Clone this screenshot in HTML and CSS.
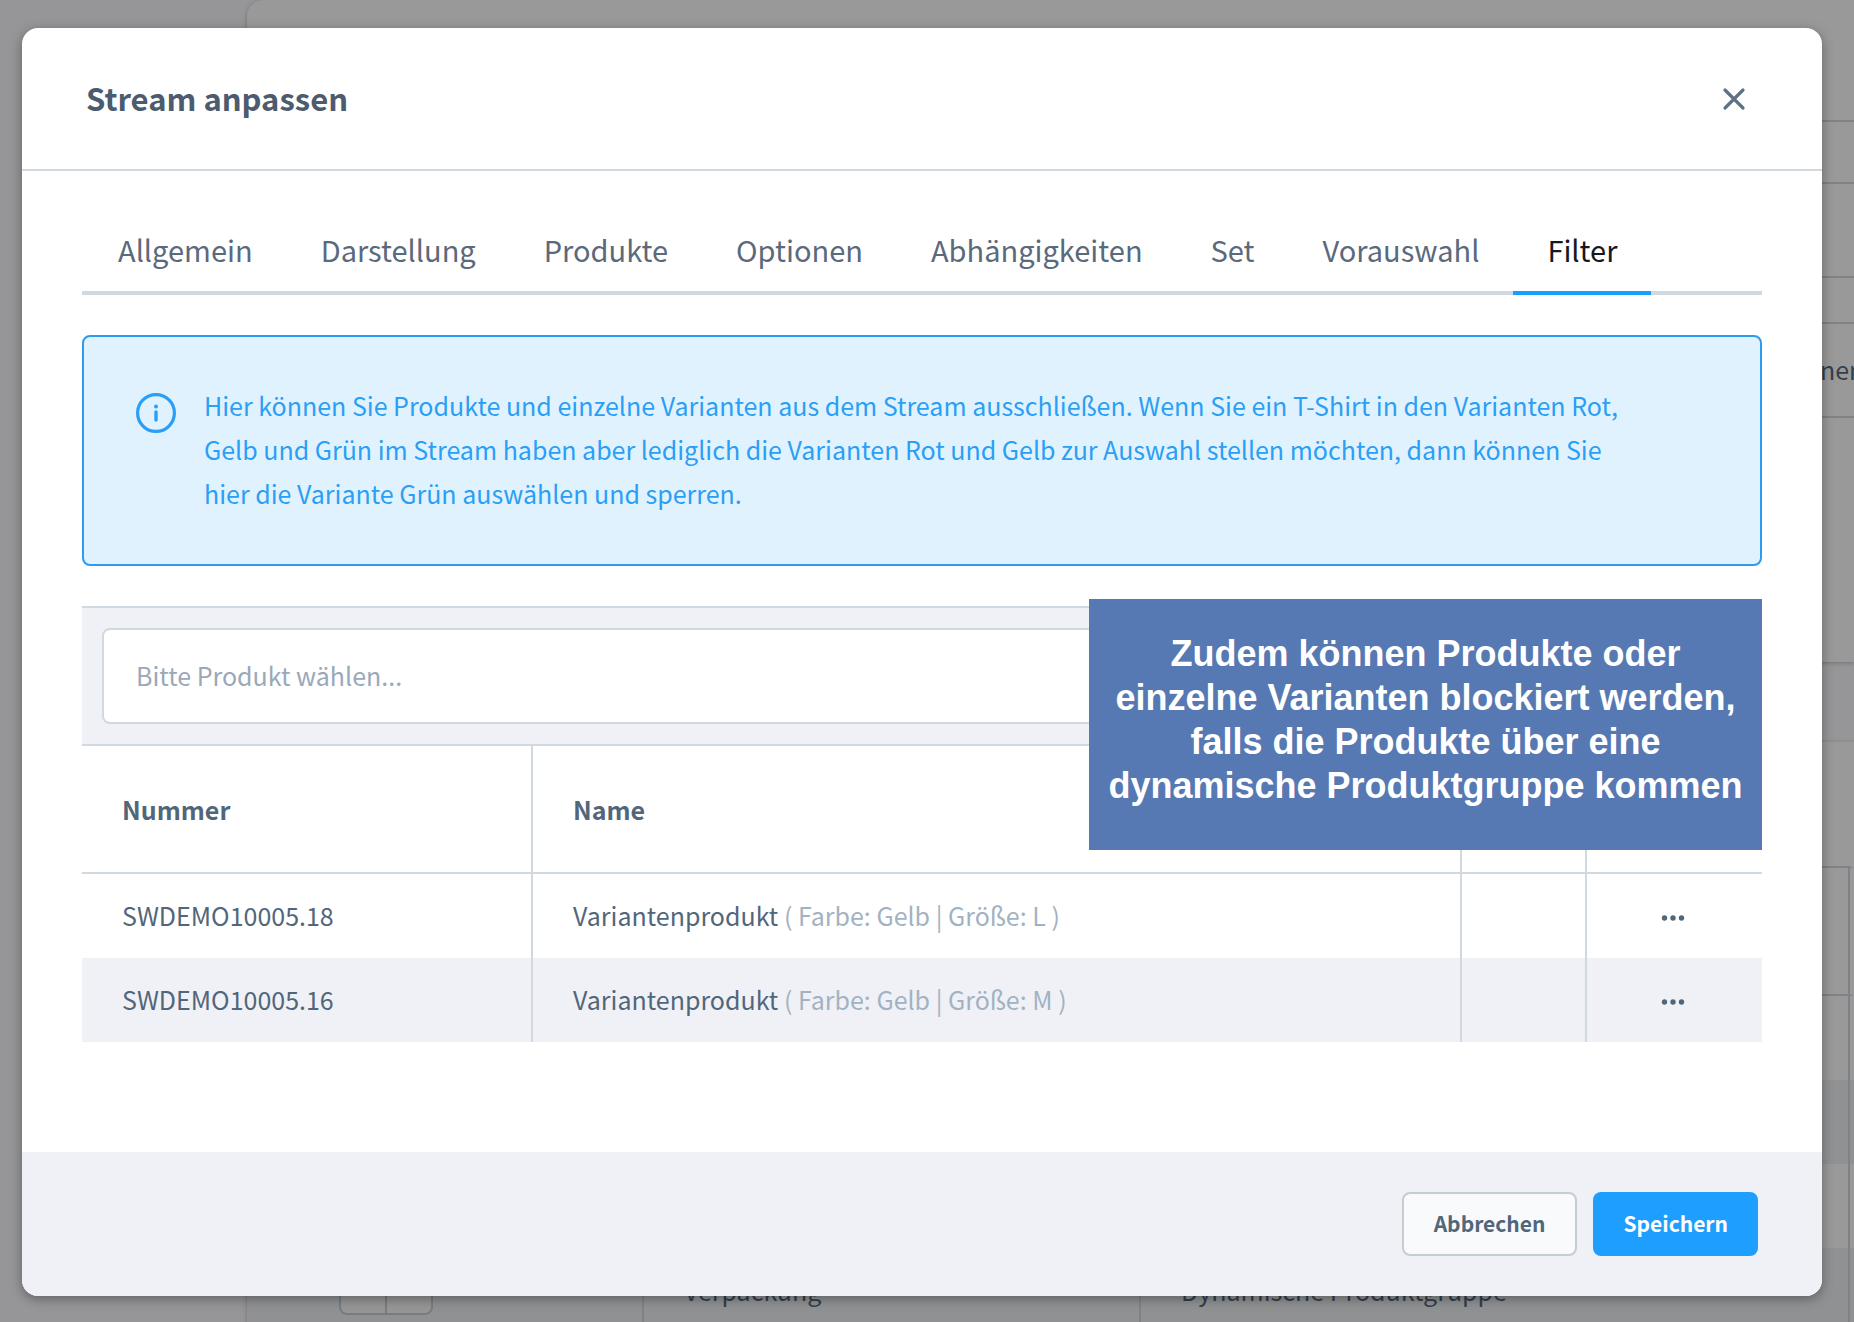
FILE: index.html
```html
<!DOCTYPE html>
<html lang="de">
<head>
<meta charset="utf-8">
<meta name="viewport" content="width=device-width, initial-scale=1">
<title>Stream anpassen</title>
<link rel="stylesheet" href="styles.css">
</head>
<body>
<div class="page" aria-hidden="true">
  <div class="page-side"></div>
  <div class="page-main">
    <div class="page-card page-card-top">
      <div class="rule rule-gap-a"></div>
      <div class="rule rule-gap-b"></div>
      <div class="rule rule-gap-c"></div>
      <div class="rule rule-gap-d"></div>
      <div class="rule rule-gap-e"><span>nen</span></div>
    </div>
    <div class="page-card page-card-grid">
      <div class="bg-row bg-toolbar"></div>
      <div class="bg-row bg-head"></div>
      <div class="bg-row bg-line"></div>
      <div class="bg-row bg-line bg-odd"></div>
      <div class="bg-row bg-line"></div>
      <div class="bg-row bg-line bg-odd bg-last">
        <div class="bg-cell bg-cell-order"><div class="bg-stepper"><i></i><i></i></div></div>
        <div class="bg-cell bg-cell-name">Verpackung</div>
        <div class="bg-cell bg-cell-type">Dynamische Produktgruppe</div>
      </div>
    </div>
  </div>
</div>

<div class="modal" role="dialog" aria-modal="true" aria-labelledby="modal-title">
  <header class="modal-header">
    <h1 class="modal-title" id="modal-title">Stream anpassen</h1>
    <button class="modal-close" type="button" aria-label="Schließen">
      <svg width="24" height="24" viewBox="0 0 24 24" fill="none" stroke="currentColor" stroke-width="3.2" stroke-linecap="round"><path d="M3 3L21 21M21 3L3 21"/></svg>
    </button>
  </header>

  <main class="modal-body">
    <nav class="tabs">
      <a class="tab" href="#allgemein">Allgemein</a>
      <a class="tab" href="#darstellung">Darstellung</a>
      <a class="tab" href="#produkte">Produkte</a>
      <a class="tab" href="#optionen">Optionen</a>
      <a class="tab" href="#abhaengigkeiten">Abhängigkeiten</a>
      <a class="tab" href="#set">Set</a>
      <a class="tab" href="#vorauswahl">Vorauswahl</a>
      <a class="tab tab-active" href="#filter" aria-current="page">Filter</a>
    </nav>

    <div class="alert">
      <svg class="alert-icon" width="40" height="40" viewBox="0 0 40 40" fill="none" stroke="currentColor"><circle cx="20" cy="20" r="18.4" stroke-width="3.2"/><path d="M20 19V27" stroke-width="3.4" stroke-linecap="round"/><circle cx="20" cy="13.6" r="2" fill="currentColor" stroke="none"/></svg>
      <p class="alert-text">Hier können Sie Produkte und einzelne Varianten aus dem Stream ausschließen. Wenn Sie ein T-Shirt in den Varianten Rot, Gelb und Grün im Stream haben aber lediglich die Varianten Rot und Gelb zur Auswahl stellen möchten, dann können Sie hier die Variante Grün auswählen und sperren.</p>
    </div>

    <section class="grid">
      <div class="grid-toolbar">
        <input class="product-select" type="text" placeholder="Bitte Produkt wählen..." aria-label="Produkt">
      </div>
      <table class="grid-table">
        <colgroup><col class="col-number"><col><col class="col-empty"><col class="col-actions"></colgroup>
        <thead>
          <tr><th>Nummer</th><th>Name</th><th></th><th></th></tr>
        </thead>
        <tbody>
          <tr>
            <td>SWDEMO10005.18</td>
            <td>Variantenprodukt <span class="variant">( Farbe: Gelb | Größe: L )</span></td>
            <td></td>
            <td class="actions"><button class="row-menu" type="button" aria-label="Aktionen"><svg width="24" height="8" viewBox="0 0 24 8" fill="currentColor"><circle cx="3.5" cy="4" r="2.7"/><circle cx="12" cy="4" r="2.7"/><circle cx="20.5" cy="4" r="2.7"/></svg></button></td>
          </tr>
          <tr>
            <td>SWDEMO10005.16</td>
            <td>Variantenprodukt <span class="variant">( Farbe: Gelb | Größe: M )</span></td>
            <td></td>
            <td class="actions"><button class="row-menu" type="button" aria-label="Aktionen"><svg width="24" height="8" viewBox="0 0 24 8" fill="currentColor"><circle cx="3.5" cy="4" r="2.7"/><circle cx="12" cy="4" r="2.7"/><circle cx="20.5" cy="4" r="2.7"/></svg></button></td>
          </tr>
        </tbody>
      </table>
      <aside class="callout">Zudem können Produkte oder<br>einzelne Varianten blockiert werden,<br>falls die Produkte über eine<br>dynamische Produktgruppe kommen</aside>
    </section>
  </main>

  <footer class="modal-footer">
    <button class="btn" type="button">Abbrechen</button>
    <button class="btn btn-primary" type="button">Speichern</button>
  </footer>
</div>
</body>
</html>
```
FILE: styles.css
```css
* { box-sizing: border-box; }

body {
  margin: 0;
  min-height: 100vh;
  padding: 28px 32px 26px 22px;
  display: flex;
  position: relative;
  overflow-x: hidden;
  background: #969698;
  color: #52667a;
  font-family: "Noto Sans CJK SC", "Noto Sans", sans-serif;
  font-size: 25px;
  line-height: 44px;
}

button, input { font: inherit; color: inherit; }

/* Dimmed page behind the dialog */
.page {
  position: absolute;
  inset: 0;
  display: flex;
  overflow: hidden;
  color: #343f4b;
}
.page-side { flex: 0 0 247px; }
.page-main {
  flex: 1;
  min-width: 0;
  display: flex;
  flex-direction: column;
  gap: 80px;
}
.page-card {
  background: #999;
  box-shadow: 0 1px 4px rgba(0, 0, 0, .25);
}
.page-card-top {
  height: 662px;
  flex: none;
  border-radius: 16px 0 0 0;
}
.page-card-grid { flex: 1; }
.rule { border-bottom: 2px solid #7f8388; }
.rule-gap-a { height: 122px; }
.rule-gap-b { height: 62px; }
.rule-gap-c { height: 94px; }
.rule-gap-d { height: 46px; }
.rule-gap-e {
  height: 94px;
  padding-bottom: 2px;
  display: flex;
  justify-content: flex-end;
  align-items: center;
}
.rule-gap-e span { width: 34px; }
.bg-row { border-right: 4px solid #999; }
.bg-toolbar {
  height: 126px;
  border-bottom: 2px solid #7f8388;
}
.bg-head {
  height: 128px;
  border-bottom: 2px solid #7f8388;
  box-shadow: inset -2px 0 #7f8388;
}
.bg-line {
  height: 84px;
  box-shadow: inset -2px 0 #7f8388;
}
.bg-odd {
  background: #8f9193;
  border-right-color: #8f9193;
}
.bg-last { display: flex; }
.bg-cell {
  flex: 1;
  padding: 20px 40px;
  border-right: 2px solid #7f8388;
  white-space: nowrap;
}
.bg-cell-order {
  flex: 0 0 397px;
  padding: 16px 92px;
}
.bg-cell-name { flex: 0 0 497px; }
.bg-stepper {
  width: 94px;
  height: 51px;
  display: flex;
  border: 2px solid #777c81;
  border-radius: 8px;
  background: #969697;
}
.bg-stepper i { flex: 1; }
.bg-stepper i + i { border-left: 2px solid #777c81; }

/* Dialog */
.modal {
  position: relative;
  flex: 1;
  min-width: 0;
  display: flex;
  flex-direction: column;
  overflow: hidden;
  background: #fff;
  border-radius: 16px;
  box-shadow: 0 3px 12px rgba(0, 0, 0, .35);
}
.modal-header {
  height: 143px;
  padding: 0 64px;
  display: flex;
  align-items: center;
  justify-content: space-between;
  border-bottom: 2px solid #d1d9e0;
}
.modal-title {
  margin: 0;
  padding-bottom: 2px;
  font-size: 31px;
  font-weight: 700;
  line-height: 44px;
  color: #4c5b6e;
}
.modal-close {
  width: 48px;
  height: 48px;
  padding: 0;
  display: grid;
  place-items: center;
  border: 0;
  background: none;
  color: #5f7184;
}
.modal-body {
  flex: 1;
  padding: 40px 60px;
}

.tabs {
  display: flex;
  margin-bottom: 40px;
  padding-left: 2px;
  box-shadow: inset 0 -4px #d1d9e0;
}
.tab {
  padding: 18px 34px 22px;
  border-bottom: 4px solid transparent;
  color: #5b697c;
  font-size: 29px;
  line-height: 40px;
  text-decoration: none;
}
.tab-active {
  border-bottom-color: #189eff;
  color: #16181c;
}

.alert {
  display: flex;
  gap: 28px;
  margin-bottom: 40px;
  padding: 46px 120px 49px 52px;
  border: 2px solid #2d9bee;
  border-radius: 8px;
  background: #e1f2ff;
  color: #2a9ff5;
}
.alert-icon {
  flex: none;
  margin-top: 10px;
}
.alert-text { margin: 0; }

.grid { position: relative; }
.grid-toolbar {
  padding: 20px;
  border: solid #d1d9e0;
  border-width: 2px 0;
  background: #f0f1f6;
}
.product-select {
  display: block;
  width: 100%;
  height: 96px;
  padding: 0 32px 2px;
  border: 2px solid #d1d9e0;
  border-radius: 8px;
  background: #fff;
}
.product-select::placeholder {
  color: #9aa8b9;
  opacity: 1;
}
.grid-table {
  width: 100%;
  table-layout: fixed;
  border-spacing: 0;
}
.col-number { width: 451px; }
.col-empty { width: 125px; }
.col-actions { width: 175px; }
.grid-table th, .grid-table td {
  padding: 19px 40px 21px;
  border-right: 2px solid #d1d9e0;
  text-align: left;
}
.grid-table th:last-child, .grid-table td:last-child { border-right: 0; }
.grid-table th {
  height: 128px;
  padding: 20px 40px;
  border-bottom: 2px solid #d1d9e0;
  font-weight: 700;
}
.grid-table tbody tr:nth-child(even) { background: #f0f1f6; }
.variant { color: #a3b2c2; }
.grid-table .actions {
  padding: 0 4px 0 0;
  text-align: center;
}
.row-menu {
  width: 48px;
  height: 44px;
  padding: 0;
  display: inline-grid;
  place-items: center;
  vertical-align: middle;
  border: 0;
  background: none;
}

.callout {
  position: absolute;
  top: -7px;
  right: 0;
  width: 673px;
  padding: 33px 0 42px;
  background: #5678b3;
  color: #fff;
  font: bold 36px/44px "Liberation Sans", Arial, sans-serif;
  text-align: center;
  white-space: nowrap;
}

.modal-footer {
  display: flex;
  justify-content: flex-end;
  gap: 16px;
  padding: 40px 64px;
  background: #f0f1f6;
}
.btn {
  height: 64px;
  padding: 0 30px 2px;
  border: 2px solid #c2cdd4;
  border-radius: 8px;
  background: #f9fafc;
  font-size: 21px;
  font-weight: 700;
  line-height: 32px;
}
.btn-primary {
  border: 0;
  background: #1e9eff;
  color: #fff;
}
```
